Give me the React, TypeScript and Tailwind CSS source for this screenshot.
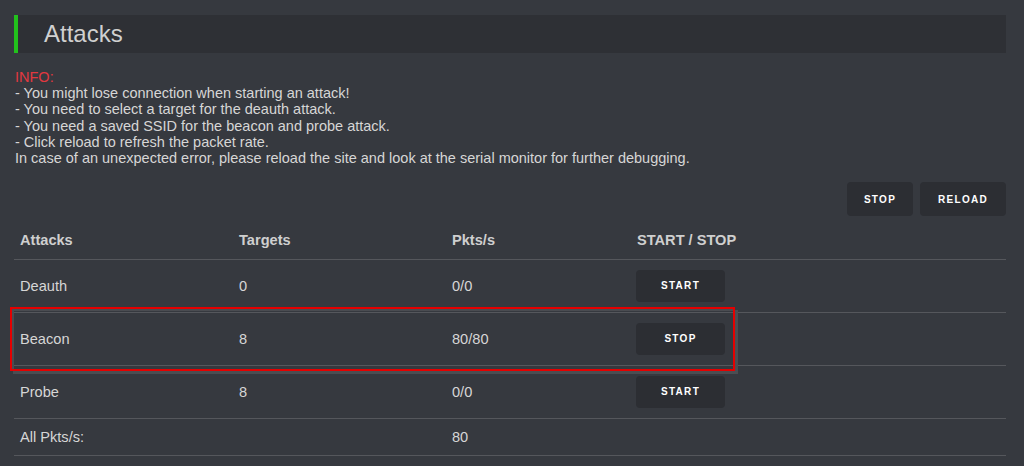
import React from "react";

const rows = [
  { name: "Deauth", targets: "0", pkts: "0/0", btn: "START" },
  { name: "Beacon", targets: "8", pkts: "80/80", btn: "STOP" },
  { name: "Probe", targets: "8", pkts: "0/0", btn: "START" },
];

function Btn({ label, className = "" }: { label: string; className?: string }) {
  return (
    <button
      className={
        "flex items-center justify-center rounded-[4px] bg-[#2c2e33] text-[10px] font-bold tracking-[1.3px] text-white " +
        className
      }
    >
      {label}
    </button>
  );
}

export default function App() {
  return (
    <div
      className="relative min-h-[466px] w-[1024px] bg-[#36393f] pl-[14px] pr-[18px] pt-[15px] text-[#d6d6d6]"
      style={{ fontFamily: '"Liberation Sans", Arial, sans-serif' }}
    >
      <div className="flex h-[38px] items-center border-l-[4px] border-[#22c11c] bg-[#2e3035] pl-[26px]">
        <h1 className="text-[24px] leading-none text-[#d0d0d0]">Attacks</h1>
      </div>

      <div className="mt-[16px] pl-[1px] text-[14.5px] leading-[16.2px]">
        <div className="text-[#e2383f]">INFO:</div>
        <div>- You might lose connection when starting an attack!</div>
        <div>- You need to select a target for the deauth attack.</div>
        <div>- You need a saved SSID for the beacon and probe attack.</div>
        <div>- Click reload to refresh the packet rate.</div>
        <div>
          In case of an unexpected error, please reload the site and look at the serial monitor for further debugging.
        </div>
      </div>

      <div className="mt-[16px] flex justify-end gap-[7px]">
        <Btn label="STOP" className="h-[34px] w-[66px]" />
        <Btn label="RELOAD" className="h-[34px] w-[86px]" />
      </div>

      <div className="text-[14.6px] leading-[16px]">
        <div className="flex border-b border-[#55575c] pb-[11px] pt-[16px] font-bold text-[#cfcfcf]">
          <div className="w-[219px] pl-[6px]">Attacks</div>
          <div className="w-[213px] pl-[6px]">Targets</div>
          <div className="w-[185px] pl-[6px]">Pkts/s</div>
          <div className="flex-1 pl-[6px]">START / STOP</div>
        </div>
        {rows.map((r) => (
          <div key={r.name} className="flex h-[53px] items-center border-b border-[#55575c]">
            <div className="w-[219px] pl-[6px]">{r.name}</div>
            <div className="w-[213px] pl-[6px]">{r.targets}</div>
            <div className="w-[185px] pl-[6px]">{r.pkts}</div>
            <div className="flex-1 pl-[5px]">
              <Btn label={r.btn} className="h-[32px] w-[89px]" />
            </div>
          </div>
        ))}
        <div className="flex h-[37px] items-center border-b border-[#55575c]">
          <div className="w-[219px] pl-[6px]">All Pkts/s:</div>
          <div className="w-[213px] pl-[6px]"></div>
          <div className="w-[185px] pl-[6px]">80</div>
          <div className="flex-1"></div>
        </div>
      </div>

      <div className="pointer-events-none absolute left-[10px] top-[307px] h-[64px] w-[725px] border-2 border-[#e50000] shadow-[inset_2px_2px_0_#4a4c51,3px_3px_0_#4b4d52]" />
    </div>
  );
}
